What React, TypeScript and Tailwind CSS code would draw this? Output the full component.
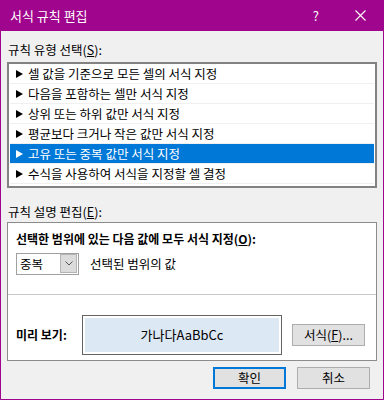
const FONT = "font-['Malgun_Gothic','Noto_Sans_CJK_KR',sans-serif]";

const ruleTypes = [
  "셀 값을 기준으로 모든 셀의 서식 지정",
  "다음을 포함하는 셀만 서식 지정",
  "상위 또는 하위 값만 서식 지정",
  "평균보다 크거나 작은 값만 서식 지정",
  "고유 또는 중복 값만 서식 지정",
  "수식을 사용하여 서식을 지정할 셀 결정",
];

function Arrow({ white }: { white?: boolean }) {
  return (
    <svg width="7" height="8" viewBox="0 0 7 8" className="shrink-0">
      <polygon points="0,0 7,4 0,8" fill={white ? "#ffffff" : "#000000"} />
    </svg>
  );
}

export default function App() {
  const selected = 4;

  return (
    <div className={`${FONT} flex h-[400px] w-[384px] flex-col text-[12.5px] leading-[16px] text-black`}>
      {/* title bar */}
      <div className="flex h-[31px] shrink-0 items-center bg-[#a0058d] text-white">
        <span className="ml-[10px] text-[13px]">서식 규칙 편집</span>
        <span className="ml-auto mr-[36px] text-[13px]">?</span>
        <svg width="11" height="11" viewBox="0 0 11 11" className="mr-[18px]">
          <path d="M0.5 0.5 L10.5 10.5 M10.5 0.5 L0.5 10.5" stroke="#ffffff" strokeWidth="1.1" />
        </svg>
      </div>

      <div className="flex flex-1 flex-col border-x border-b border-[#a0058d] bg-[#f0f0f0] px-[6px]">
        <div className="mt-[11px] h-[16px] pl-[1px]">
          규칙 유형 선택(<span className="underline">S</span>):
        </div>

        <div className="mt-[4px] border-2 border-[#828282] bg-white px-[1px] pb-[2px]">
          {ruleTypes.map((label, i) => (
            <div
              key={label}
              className={`flex h-[20px] items-center gap-[5px] border-b border-[#f0f0f0] pl-[6px] ${
                i === selected ? "bg-[#0078d7] text-white" : ""
              }`}
            >
              <Arrow white={i === selected} />
              <span>{label}</span>
            </div>
          ))}
        </div>

        <div className="mt-[16px] h-[16px] pl-[1px]">
          규칙 설명 편집(<span className="underline">E</span>):
        </div>

        <div className="mt-[2px] border border-[#8c8c8c] bg-white pb-[5px] pt-[8px]">
          <div className="h-[16px] px-[8px] text-[12px] font-bold">
            선택한 범위에 있는 다음 값에 모두 서식 지정(<span className="underline">O</span>):
          </div>

          <div className="mt-[6px] flex items-center px-[8px]">
            <div className="flex h-[22px] w-[63px] items-center border border-[#a0a0a0] pl-[3px]">
              <span>중복</span>
              <div className="ml-auto mr-[1px] flex h-[19px] w-[17px] items-center justify-center self-start border border-[#b4b4b4] bg-[#dcdcdc]">
                <svg width="8" height="5" viewBox="0 0 8 5">
                  <path d="M0.5 0.5 L4 4 L7.5 0.5" stroke="#555555" strokeWidth="1" fill="none" />
                </svg>
              </div>
            </div>
            <span className="ml-[11px]">선택된 범위의 값</span>
          </div>

          <div className="mt-[19px] h-px bg-[#c8c8c8]" />

          <div className="mt-[20px] flex items-center pl-[8px] pr-[11px]">
            <span className="w-[66px] text-[12px] font-bold">미리 보기:</span>
            <div className="h-[40px] w-[200px] border border-[#646464] bg-white p-[2px]">
              <div className="flex h-full items-center justify-center bg-[#dce8f4] text-[13px]">
                가나다AaBbCc
              </div>
            </div>
            <button className="ml-auto flex h-[22px] w-[73px] items-center justify-center border border-[#adadad] bg-[#e1e1e1]">
              서식(<span className="underline">F</span>)...
            </button>
          </div>
        </div>

        <div className="mr-[7px] mt-[6px] flex justify-end gap-[11px]">
          <button className="flex h-[22px] w-[73px] items-center justify-center border-2 border-[#0078d7] bg-[#e1e1e1]">
            확인
          </button>
          <button className="flex h-[22px] w-[73px] items-center justify-center border border-[#adadad] bg-[#e1e1e1]">
            취소
          </button>
        </div>
      </div>
    </div>
  );
}
